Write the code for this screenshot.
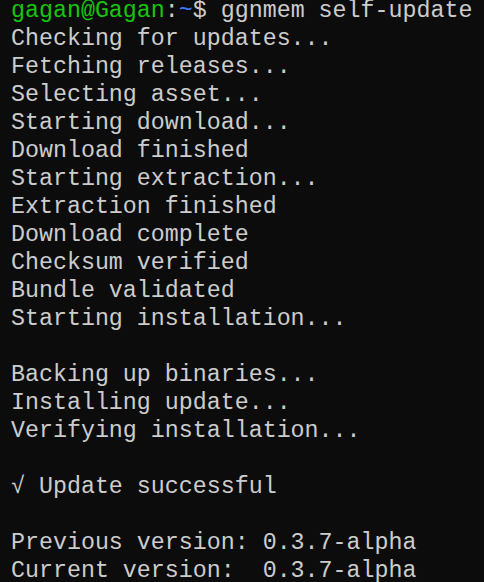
const lines = [
  "Checking for updates...",
  "Fetching releases...",
  "Selecting asset...",
  "Starting download...",
  "Download finished",
  "Starting extraction...",
  "Extraction finished",
  "Download complete",
  "Checksum verified",
  "Bundle validated",
  "Starting installation...",
  "",
  "Backing up binaries...",
  "Installing update...",
  "Verifying installation...",
  "",
  "√ Update successful",
  "",
  "Previous version: 0.3.7-alpha",
  "Current version:  0.3.7-alpha",
]

export default function App() {
  return (
    <div className="w-[484px] h-[582px] overflow-hidden bg-[#0c0c0c] text-[#cccccc]">
      <div className="-mt-[3px] pl-[11px] font-['Liberation_Mono',monospace] text-[23.3px] leading-[28px] whitespace-pre">
        <div className="h-[28px]">
          <span className="text-[#16c60c]">gagan@Gagan</span>
          <span>:</span>
          <span className="text-[#3b78ff]">~</span>
          <span>$ ggnmem self-update</span>
        </div>
        {lines.map((line, i) => (
          <div key={i} className="h-[28px]">
            {line}
          </div>
        ))}
      </div>
    </div>
  )
}
